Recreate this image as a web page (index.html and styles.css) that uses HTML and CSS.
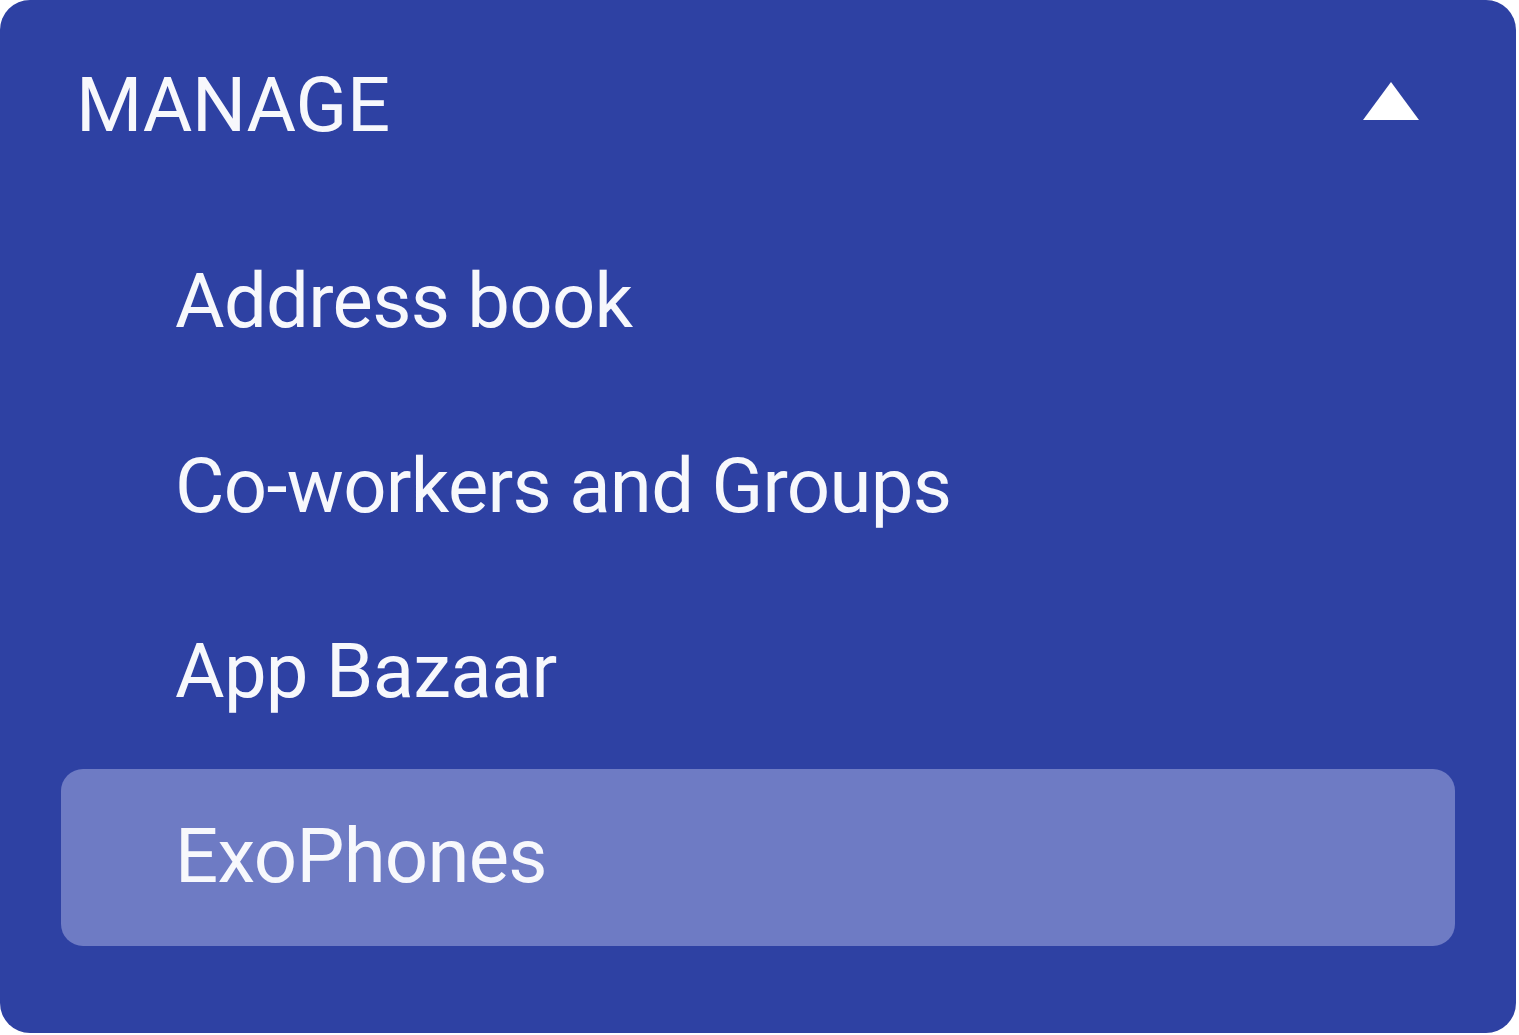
FILE: index.html
```html
<!DOCTYPE html>
<html lang="en">
<head>
<meta charset="utf-8">
<title>Manage</title>
<link rel="stylesheet" href="styles.css">
</head>
<body>
<nav class="panel">
  <div class="panel-header">
    <span class="panel-title">MANAGE</span>
    <svg class="caret" width="56" height="38" viewBox="0 0 56 38" aria-hidden="true">
      <polygon points="28,0 56,38 0,38" fill="#ffffff"/>
    </svg>
  </div>
  <ul class="menu">
    <li class="menu-item">Address book</li>
    <li class="menu-item">Co-workers and Groups</li>
    <li class="menu-item">App Bazaar</li>
    <li class="menu-item is-active">ExoPhones</li>
  </ul>
</nav>
</body>
</html>
```

FILE: styles.css
```css
html, body {
  margin: 0;
  padding: 0;
  background: #ffffff;
}

body {
  font-family: Roboto, "Noto Sans", "Liberation Sans", sans-serif;
  color: #f7f8fc;
}

.panel {
  width: 1516px;
  height: 1033px;
  box-sizing: border-box;
  background: #2e41a3;
  border-radius: 30px;
  padding: 0 61px 87px;
  display: flex;
  flex-direction: column;
}

.panel-header {
  height: 206px;
  display: flex;
  align-items: center;
  justify-content: space-between;
  padding: 4px 36px 0 15px;
  box-sizing: border-box;
}

.panel-title {
  font-size: 76px;
  line-height: 1;
  letter-spacing: -0.3px;
}

.caret {
  display: block;
  margin-bottom: 8px;
}

.menu {
  list-style: none;
  margin: 8px 0 0;
  padding: 0;
  display: flex;
  flex-direction: column;
  gap: 8px;
}

.menu-item {
  height: 177px;
  box-sizing: border-box;
  display: flex;
  align-items: center;
  padding: 0 0 4px 114px;
  font-size: 76px;
  line-height: 1;
  letter-spacing: -0.7px;
  border-radius: 22px;
}

.menu-item.is-active {
  background: #6e7bc4;
}
```
